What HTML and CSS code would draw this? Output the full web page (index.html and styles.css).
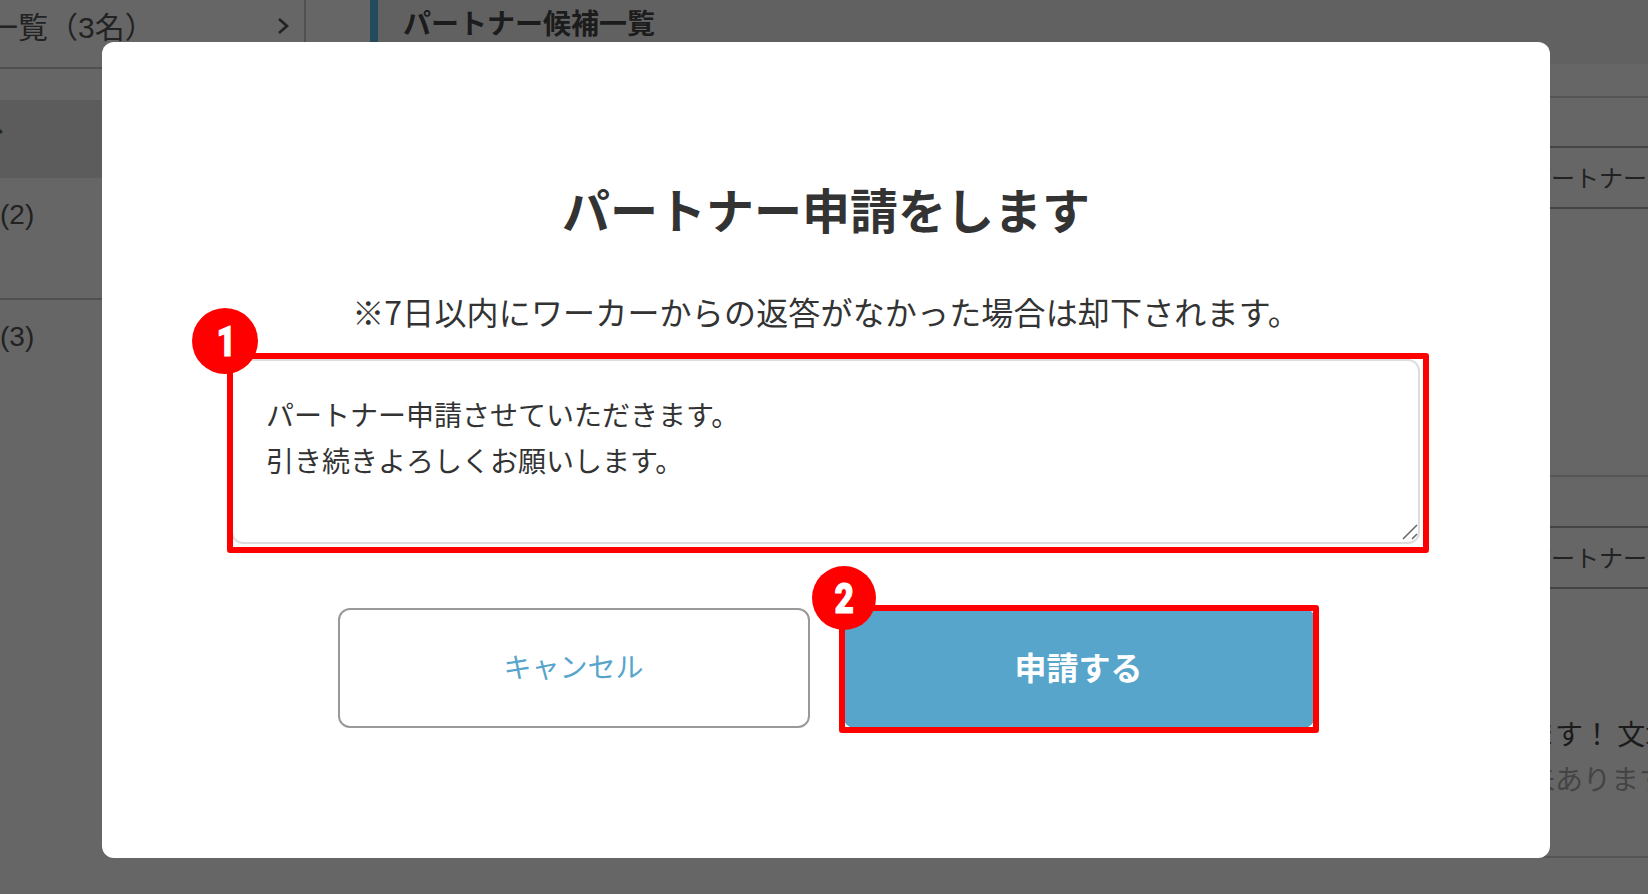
FILE: index.html
```html
<!DOCTYPE html>
<html lang="ja">

<head>
    <meta charset="UTF-8">
    <meta name="viewport" content="width=device-width, initial-scale=1.0">
    <title>パートナー申請</title>
    <link rel="stylesheet" href="styles.css">
</head>

<body>
    <div class="page">
        <aside class="side">
            <div class="side-head">
                <span class="side-title">パートナー一覧（3名）</span>
                <svg class="chevron" width="12" height="20" viewBox="0 0 12 20">
                    <path d="M2 3l8 7-8 7" fill="none" stroke="#555" stroke-width="2.6"/>
                </svg>
            </div>
            <div class="side-active"><span class="side-active-text">パートナーへ</span></div>
            <div class="side-row"><span class="side-count">申請中(2)</span></div>
            <div class="side-row last"><span class="side-count">候補者(3)</span></div>
        </aside>

        <main class="main">
            <h2 class="main-title">パートナー候補一覧</h2>
            <div class="main-top"></div>
            <div class="action-row first">パートナー申請</div>
            <div class="main-body"></div>
            <div class="action-row">パートナー申請</div>
            <div class="main-msg">
                <p class="msg-line">ます！ 文章</p>
                <p class="msg-sub">未あります</p>
            </div>
        </main>
    </div>

    <div class="overlay">
        <form class="modal">
            <h1 class="modal-title">パートナー申請をします</h1>
            <p class="modal-note">※7日以内にワーカーからの返答がなかった場合は却下されます。</p>
            <div class="mark mark-text">
                <span class="badge badge-one"><span class="digit">1</span></span>
                <textarea class="message">パートナー申請させていただきます。
引き続きよろしくお願いします。</textarea>
                <svg class="grip" width="16" height="16" viewBox="0 0 16 16">
                    <path d="M1 15L15 1M10 15l5-5" fill="none" stroke="#666" stroke-width="1.5"/>
                </svg>
            </div>
            <div class="buttons">
                <button type="button" class="btn btn-cancel">キャンセル</button>
                <div class="mark mark-btn">
                    <span class="badge badge-two"><span class="digit">2</span></span>
                    <button type="submit" class="btn btn-send">申請する</button>
                </div>
            </div>
        </form>
    </div>
</body>
</html>
```

FILE: styles.css
```css
* {
    box-sizing: border-box;
}
html, body {
    margin: 0;
    height: 100%;
    overflow: hidden;
}
body {
    font-family: "Noto Sans CJK JP", "Liberation Sans", sans-serif;
    color: #555;
}
.page {
    display: flex;
    height: 894px;
    background: #fff;
}

/* left list, cut off by the window edge */
.side {
    width: 306px;
    flex-shrink: 0;
    overflow: hidden;
    font-family: "Liberation Sans", "Noto Sans CJK JP", sans-serif;
    font-size: 28px;
}
.side-head {
    display: flex;
    align-items: center;
    justify-content: space-between;
    height: 69px;
    padding: 0 15px 17px 0;
    border-right: 2px solid #c8c8c8;
    border-bottom: 2px solid #c8c8c8;
}
.side-title {
    margin-left: -162px;
    font-size: 30px;
    white-space: nowrap;
}
.chevron {
    margin-top: 2px;
}
.side-active {
    height: 78px;
    margin-top: 31px;
    padding-top: 3px;
    background: #e6e6e6;
}
.side-active-text {
    display: block;
    margin-left: -164px;
    white-space: nowrap;
    line-height: 46px;
}
.side-row {
    height: 122px;
    padding-top: 14px;
    border-bottom: 2px solid #c8c8c8;
}
.side-row.last {
    border-bottom: 0;
}
.side-count {
    display: block;
    margin-left: -84px;
    white-space: nowrap;
    line-height: 46px;
}

/* right column */
.main {
    flex: 1;
    min-width: 0;
    margin-left: 64px;
}
.main-title {
    height: 64px;
    margin: 0;
    padding-left: 25px;
    border-left: 8px solid #58bce6;
    background: #f3f3f3;
    color: #474747;
    font-size: 28px;
    font-weight: bold;
    line-height: 44px;
}
.main-top {
    height: 34px;
    border-bottom: 2px solid #d4d4d4;
}
.action-row {
    height: 63px;
    padding-left: 1157px;
    border-top: 2px solid #aaa;
    border-bottom: 2px solid #aaa;
    font-size: 24px;
    line-height: 58px;
    white-space: nowrap;
}
.action-row.first {
    margin-top: 48px;
}
.main-body {
    height: 268px;
    margin-bottom: 49px;
    border-bottom: 2px solid #d4d4d4;
}
.main-msg {
    height: 269px;
    padding: 122px 0 0 1157px;
    border-bottom: 2px solid #d4d4d4;
    font-size: 28px;
    line-height: 45px;
    white-space: nowrap;
}
.msg-line,
.msg-sub {
    margin: 0;
}
.msg-line {
    color: #444;
}
.msg-sub {
    color: #aaa;
}

/* dialog */
.overlay {
    position: fixed;
    inset: 0;
    padding: 42px 0 0 102px;
    background: rgba(0, 0, 0, 0.6);
}
.modal {
    display: flex;
    flex-direction: column;
    width: 1448px;
    height: 816px;
    padding-top: 136px;
    border-radius: 12px;
    background: #fff;
    color: #333;
}
.modal-title {
    margin: 0;
    font-size: 48px;
    font-weight: bold;
    line-height: 60px;
    text-align: center;
}
.modal-note {
    margin: 50px 0 25px;
    font-size: 32px;
    letter-spacing: 0.17px;
    line-height: 46px;
    text-align: center;
}
.mark {
    position: relative;
}
.mark::after {
    content: "";
    position: absolute;
    border: 6px solid #f00;
    border-radius: 3px;
    pointer-events: none;
}
.mark-text {
    align-self: flex-start;
    margin-left: 129px;
}
.mark-text::after {
    inset: -6px -9px -9px -4px;
}
.mark-btn::after {
    inset: -3px -4px -5px -4px;
}
.message {
    display: block;
    width: 1189px;
    height: 185px;
    padding: 30px 32px 0 33px;
    border: 2px solid #ddd;
    border-radius: 12px;
    outline: none;
    resize: none;
    color: #333;
    font-family: inherit;
    font-size: 28px;
    line-height: 46px;
}
.grip {
    position: absolute;
    right: 2px;
    bottom: 4px;
}
.badge {
    position: absolute;
    z-index: 1;
    display: flex;
    align-items: center;
    justify-content: center;
    padding-left: 2px;
    border-radius: 50%;
    background: #f00;
    color: #fff;
    font-family: Roboto, "Liberation Sans", sans-serif;
    font-size: 42px;
    font-weight: 900;
}
.digit {
    -webkit-text-stroke: 1px #fff;
    transform: scaleX(0.8);
}
.badge-one {
    top: -51px;
    left: -39px;
    width: 66px;
    height: 66px;
}
.badge-two {
    top: -42px;
    left: -31px;
    width: 64px;
    height: 64px;
}
.buttons {
    display: flex;
    justify-content: center;
    gap: 33px;
    margin-top: 64px;
}
.btn {
    display: block;
    width: 472px;
    height: 120px;
    padding-bottom: 6px;
    border-radius: 12px;
    font-family: inherit;
    font-size: 28px;
}
.btn-cancel {
    border: 2px solid #999;
    background: #fff;
    color: #57a5cb;
}
.btn-send {
    border: 0;
    background: #57a5cb;
    color: #fff;
    font-size: 32px;
    font-weight: bold;
}
```
